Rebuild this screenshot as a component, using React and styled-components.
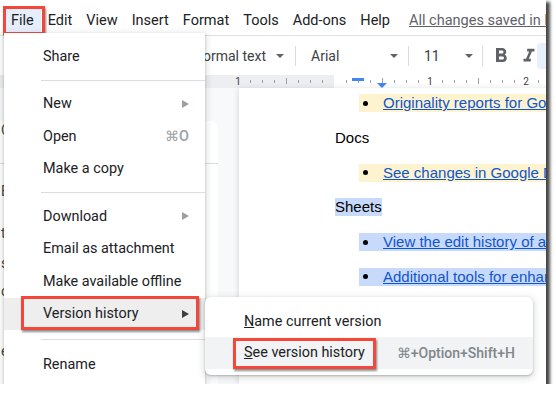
import React from 'react';
import styled, { createGlobalStyle, css } from 'styled-components';

const GlobalStyle = createGlobalStyle`
  body {
    margin: 0;
    background: #fff;
    font-family: Roboto, "Liberation Sans", Arial, sans-serif;
  }
`;

const redBox = css`
  content: '';
  position: absolute;
  border: 3px solid #f2473a;
  box-shadow: 1px 2px 2px rgba(0, 0, 0, 0.45);
  pointer-events: none;
`;

const Screen = styled.div`
  position: relative;
  width: 546px;
  height: 384px;
  overflow: hidden;
  background: #fff;
  box-shadow: 3px 3px 3px 1px rgba(0, 0, 0, 0.72);
  display: flex;
  flex-direction: column;
`;

const MenuBar = styled.div`
  display: flex;
  align-items: center;
  height: 36px;
  flex-shrink: 0;
  padding: 6px 0 0 4px;
  box-sizing: border-box;
  border-bottom: 1px solid #e0e0e0;
  font-size: 14.5px;
  color: #202124;
  white-space: nowrap;
`;

const MenuTitle = styled.div`
  position: relative;
  flex-shrink: 0;
  padding: 3px 7px;
  line-height: 20px;

  ${(p) => p.$active && css`
    background: #e6eefb;
    &::after {
      ${redBox}
      left: -1px;
      right: -4px;
      top: -2px;
      bottom: -1px;
    }
  `}
`;

const SaveStatus = styled.div`
  flex-shrink: 0;
  margin-left: 12px;
  color: #5f6368;
  text-decoration: underline;
`;

const Toolbar = styled.div`
  display: flex;
  align-items: center;
  height: 36px;
  padding-top: 4px;
  box-sizing: border-box;
  flex-shrink: 0;
  font-size: 14px;
  color: #3c4043;
  white-space: nowrap;
`;

const Dropdown = styled.div`
  display: flex;
  align-items: center;
  flex-shrink: 0;
  width: ${(p) => p.$width}px;
  margin-left: ${(p) => p.$offset}px;
  padding-right: 4px;
  box-sizing: border-box;
`;

const Caret = styled.span`
  margin-left: auto;
  border-top: 4px solid #5f6368;
  border-left: 4px solid transparent;
  border-right: 4px solid transparent;
`;

const ToolSep = styled.div`
  flex-shrink: 0;
  width: 1px;
  height: 20px;
  background: #dadce0;
  margin-left: ${(p) => p.$offset}px;
`;

const IconButton = styled.div`
  display: flex;
  align-items: center;
  justify-content: center;
  flex-shrink: 0;
  width: 24px;
  height: 26px;
  margin-left: ${(p) => p.$offset}px;
  border-radius: 4px;
  background: ${(p) => (p.$on ? '#e8f0fe' : 'transparent')};
`;

const RulerRow = styled.div`
  height: 16px;
  flex-shrink: 0;
`;

const Workspace = styled.div`
  flex: 1;
  display: flex;
  min-height: 0;
`;

const Sidebar = styled.div`
  width: 239px;
  flex-shrink: 0;
  background: #f8f9fa;
  padding-top: 11px;
  box-sizing: border-box;
`;

const OutlineCard = styled.div`
  width: 218px;
  height: 100%;
  background: #fff;
  border-radius: 0 8px 0 0;
  font-size: 14px;
  color: #3c4043;
  white-space: nowrap;
`;

const OutlineEntry = styled.div`
  line-height: 18px;
  padding-left: 1px;
  margin-top: ${(p) => p.$gap}px;
`;

const OutlineDivider = styled.div`
  height: 1px;
  background: #dadce0;
  margin: 24px 0 0;
`;

const Page = styled.div`
  flex: 1;
  background: #fff;
  box-shadow: -1px 0 5px rgba(60, 64, 67, 0.15);
  padding: 6px 0 0 96px;
  font: 15px/18px "Liberation Sans", Arial, sans-serif;
  color: #000;
  white-space: nowrap;
`;

const Para = styled.div`
  display: flex;
  height: 18px;
  margin-bottom: 16.8px;
`;

const ListPara = styled(Para)`
  padding-left: 24px;
`;

const Mark = styled.span`
  display: inline-flex;
  align-items: center;
  background: ${(p) => p.$color};
  padding-right: ${(p) => (p.$wide ? 200 : 0)}px;
`;

const Bullet = styled.span`
  width: 5px;
  height: 5px;
  border-radius: 50%;
  background: #000;
  margin: 0 15px 0 4px;
`;

const DocLink = styled.span`
  color: #1155cc;
  text-decoration: underline;
`;

const FileMenu = styled.div`
  position: absolute;
  left: 4px;
  top: 33px;
  width: 201px;
  height: 370px;
  padding-top: 7px;
  box-sizing: border-box;
  background: #fff;
  box-shadow: 0 2px 6px 2px rgba(60, 64, 67, 0.15), 0 1px 2px rgba(60, 64, 67, 0.3);
  font-size: 14.4px;
  color: #202124;
  white-space: nowrap;
`;

const MenuItem = styled.div`
  position: relative;
  display: flex;
  align-items: center;
  height: 32.5px;
  padding: 0 16px 0 39px;
  background: ${(p) => (p.$hover ? '#eeeeee' : 'transparent')};

  ${(p) => p.$boxed && css`
    &::after {
      ${redBox}
      left: 17px;
      right: 6px;
      top: -2px;
      bottom: 0;
    }
  `}
`;

const MenuSep = styled.div`
  height: 1px;
  background: #dadce0;
  margin: ${(p) => (p.$tall ? '9px 0 8px 37px' : '7px 0 7px 37px')};
`;

const Arrow = styled.span`
  margin-left: auto;
  border-left: 7px solid ${(p) => (p.$dark ? '#3c4043' : '#9e9e9e')};
  border-top: 4px solid transparent;
  border-bottom: 4px solid transparent;
`;

const Shortcut = styled.span`
  margin-left: auto;
  color: #9aa0a6;
  font-weight: 500;
`;

const SubMenu = styled.div`
  position: absolute;
  left: 205px;
  top: 297px;
  width: 328px;
  height: 78px;
  padding-top: 8px;
  box-sizing: border-box;
  background: #fff;
  border-radius: 6px;
  box-shadow: 0 2px 6px 2px rgba(60, 64, 67, 0.15), 0 1px 2px rgba(60, 64, 67, 0.3);
  font-size: 14.4px;
  color: #202124;
  white-space: nowrap;
`;

const SubItem = styled.div`
  display: flex;
  align-items: center;
  height: 32px;
  padding: 0 18px 0 39px;
  background: ${(p) => (p.$hover ? '#f1f3f4' : 'transparent')};
`;

const BoxedLabel = styled.span`
  position: relative;
  line-height: 20px;

  &::after {
    ${redBox}
    left: -11px;
    right: -11px;
    top: -5px;
    bottom: -6px;
  }
`;

const SubShortcut = styled.span`
  margin-left: auto;
  color: #80868b;
  font-weight: 500;
  font-size: 14px;
`;

const Ruler = () => {
  const ticks = [];
  for (let x = 238; x < 546; x += 12) {
    const rel = x - 334;
    if (rel === 0 || rel % 96 === 0) continue;
    const half = rel % 48 === 0;
    ticks.push(
      <line
        key={x}
        x1={x + 0.5}
        x2={x + 0.5}
        y1={half ? 6 : 8}
        y2={half ? 12 : 11}
        stroke="#9aa0a6"
        strokeWidth="1"
      />
    );
  }
  const labels = [
    { x: 238, t: '1' },
    { x: 430, t: '1' },
    { x: 526, t: '2' },
  ];
  return (
    <svg width="546" height="16" viewBox="0 0 546 16">
      <rect x="0" y="3" width="334" height="13" fill="#eceef1" />
      {ticks}
      {labels.map((l) => (
        <text
          key={l.x}
          x={l.x}
          y="13"
          textAnchor="middle"
          fontSize="10"
          fontFamily="Roboto, sans-serif"
          fill="#3c4043"
        >
          {l.t}
        </text>
      ))}
      <rect x="352" y="6" width="12" height="3" fill="#4285f4" />
      <path d="M377 11 L387 11 L382 16 Z" fill="#4285f4" />
    </svg>
  );
};

const BoldIcon = () => (
  <svg width="24" height="24" viewBox="0 0 24 24" fill="#5f6368">
    <path d="M15.6 10.79c.97-.67 1.65-1.77 1.65-2.79 0-2.26-1.75-4-4-4H7v14h7.04c2.09 0 3.71-1.7 3.71-3.79 0-1.52-.86-2.82-2.15-3.42zM10 6.5h3c.83 0 1.5.67 1.5 1.5s-.67 1.5-1.5 1.5h-3v-3zm3.5 9H10v-3h3.5c.83 0 1.5.67 1.5 1.5s-.67 1.5-1.5 1.5z" />
  </svg>
);

const ItalicIcon = () => (
  <svg width="22" height="22" viewBox="0 0 24 24" fill="#5f6368">
    <path d="M10 4v3h2.21l-3.42 8H6v3h8v-3h-2.21l3.42-8H18V4z" />
  </svg>
);

const menuTitles = ['Edit', 'View', 'Insert', 'Format', 'Tools', 'Add-ons', 'Help'];

const App = () => {
  return (
    <>
      <GlobalStyle />
      <Screen>
        <MenuBar>
          <MenuTitle $active>File</MenuTitle>
          {menuTitles.map((t) => (
            <MenuTitle key={t}>{t}</MenuTitle>
          ))}
          <SaveStatus>All changes saved in Drive</SaveStatus>
        </MenuBar>

        <Toolbar>
          <Dropdown $width={95} $offset={193}>
            Normal text
            <Caret />
          </Dropdown>
          <ToolSep $offset={7} />
          <Dropdown $width={91} $offset={15}>
            Arial
            <Caret />
          </Dropdown>
          <ToolSep $offset={6} />
          <Dropdown $width={53} $offset={15}>
            11
            <Caret />
          </Dropdown>
          <ToolSep $offset={5} />
          <IconButton $offset={6}>
            <BoldIcon />
          </IconButton>
          <IconButton $offset={4}>
            <ItalicIcon />
          </IconButton>
          <IconButton $offset={-4} $on />
        </Toolbar>

        <RulerRow>
          <Ruler />
        </RulerRow>

        <Workspace>
          <Sidebar>
            <OutlineCard>
              <OutlineEntry $gap={22}>Classroom</OutlineEntry>
              <OutlineDivider />
              <OutlineEntry $gap={18}>Editing</OutlineEntry>
              <OutlineEntry $gap={24}>tracking</OutlineEntry>
              <OutlineEntry $gap={12}>sheets</OutlineEntry>
              <OutlineEntry $gap={10}>options</OutlineEntry>
              <OutlineEntry $gap={42}>examples</OutlineEntry>
            </OutlineCard>
          </Sidebar>

          <Page>
            <ListPara>
              <Mark $color="#fdf3cf" $wide>
                <Bullet />
                <DocLink>Originality reports for Google Classroom</DocLink>
              </Mark>
            </ListPara>
            <Para>Docs</Para>
            <ListPara>
              <Mark $color="#fdf3cf" $wide>
                <Bullet />
                <DocLink>See changes in Google Docs</DocLink>
              </Mark>
            </ListPara>
            <Para>
              <Mark $color="#c8dafb">Sheets</Mark>
            </Para>
            <ListPara>
              <Mark $color="#c8dafb" $wide>
                <Bullet />
                <DocLink>View the edit history of a cell</DocLink>
              </Mark>
            </ListPara>
            <ListPara>
              <Mark $color="#c8dafb" $wide>
                <Bullet />
                <DocLink>Additional tools for enhanced version history</DocLink>
              </Mark>
            </ListPara>
          </Page>
        </Workspace>

        <FileMenu>
          <MenuItem>Share</MenuItem>
          <MenuSep />
          <MenuItem>
            New
            <Arrow />
          </MenuItem>
          <MenuItem>
            Open
            <Shortcut>⌘O</Shortcut>
          </MenuItem>
          <MenuItem>Make a copy</MenuItem>
          <MenuSep />
          <MenuItem>
            Download
            <Arrow />
          </MenuItem>
          <MenuItem>Email as attachment</MenuItem>
          <MenuItem>Make available offline</MenuItem>
          <MenuItem $hover $boxed>
            Version history
            <Arrow $dark />
          </MenuItem>
          <MenuSep $tall />
          <MenuItem>Rename</MenuItem>
        </FileMenu>

        <SubMenu>
          <SubItem>
            <span>
              <u>N</u>ame current version
            </span>
          </SubItem>
          <SubItem $hover>
            <BoxedLabel>
              <u>S</u>ee version history
            </BoxedLabel>
            <SubShortcut>⌘+Option+Shift+H</SubShortcut>
          </SubItem>
        </SubMenu>
      </Screen>
    </>
  );
};

export default App;
